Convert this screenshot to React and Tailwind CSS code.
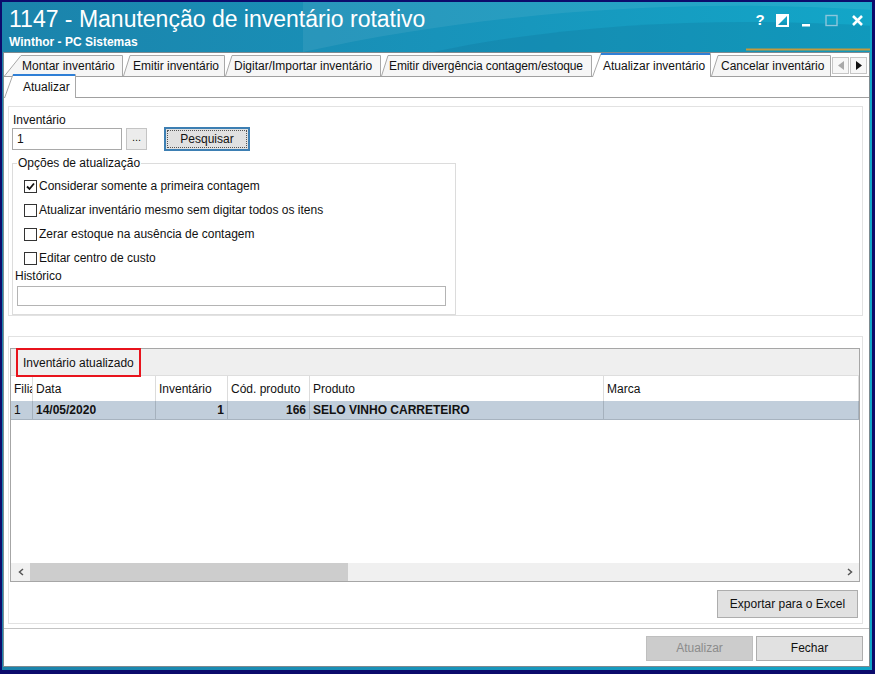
import React from "react";

const tabs = [
  { label: "Montar inventário", w: 119, cls: "w-[119px] pl-[18px]", slant: 17 },
  { label: "Emitir inventário", w: 102, cls: "w-[102px] pl-[10px]", slant: 7 },
  { label: "Digitar/Importar inventário", w: 156, cls: "w-[156px] pl-[9px]", slant: 7 },
  { label: "Emitir divergência contagem/estoque", w: 211, cls: "w-[211px] pl-[8px] tracking-[-0.1px]", slant: 7 },
  { label: "Atualizar inventário", w: 119, cls: "w-[119px] pl-[11px]", slant: 9, active: true },
  { label: "Cancelar inventário", w: 120, cls: "w-[120px] pl-[10px]", slant: 7 },
];

const columns = [
  { title: "Filial", cls: "w-[22px]", value: "1", align: "text-left" },
  { title: "Data", cls: "w-[123px]", value: "14/05/2020", align: "text-left" },
  { title: "Inventário", cls: "w-[72px]", value: "1", align: "text-right" },
  { title: "Cód. produto", cls: "w-[82px]", value: "166", align: "text-right" },
  { title: "Produto", cls: "w-[294px]", value: "SELO VINHO CARRETEIRO", align: "text-left" },
  { title: "Marca", cls: "flex-1", value: "", align: "text-left" },
];

const options = [
  { label: "Considerar somente a primeira contagem", checked: true },
  { label: "Atualizar inventário mesmo sem digitar todos os itens" },
  { label: "Zerar estoque na ausência de contagem" },
  { label: "Editar centro de custo" },
];

function Tab({ label, w, cls, slant, active }) {
  const h = active ? 24 : 21;
  return (
    <div
      className={`relative shrink-0 flex items-center whitespace-nowrap ${cls} ${
        active ? "h-[24px] -mb-px z-10" : "h-[21px]"
      }`}
    >
      <svg className="absolute inset-0" width={w} height={h}>
        <polyline
          points={`0.5,${h} ${slant},0.5 ${w - 0.5},0.5 ${w - 0.5},${h}`}
          fill={active ? "#ffffff" : "#f6f6f6"}
          stroke="#a8a8a8"
          strokeWidth="1"
        />
        {active && <line x1={slant} y1="1" x2={w - 1} y2="1" stroke="#2f7fd6" strokeWidth="2" />}
      </svg>
      <span className={`relative ${active ? "mt-[1px]" : ""}`}>{label}</span>
    </div>
  );
}

function Checkbox({ checked }) {
  return (
    <span className="w-[13px] h-[13px] border border-[#333] bg-white flex items-center justify-center shrink-0">
      {checked && (
        <svg width="11" height="11" viewBox="0 0 11 11">
          <polyline points="2,5.5 4.5,8 9,2.5" fill="none" stroke="#111" strokeWidth="1.8" />
        </svg>
      )}
    </span>
  );
}

function TitleBar() {
  return (
    <div className="relative h-[50px] shrink-0 overflow-hidden">
      {/* swoosh across the caption */}
      <svg className="absolute inset-0" width="870" height="50">
        <path d="M300 50 C 480 10, 680 -4, 870 8 L 870 0 L 300 0 Z" fill="#ffffff" opacity="0.07" />
        <path d="M430 50 C 560 22, 720 14, 870 24 L 870 50 Z" fill="#0b5f86" opacity="0.18" />
        <line x1="743" y1="47.5" x2="870" y2="47.5" stroke="#c49a3c" strokeWidth="2" />
      </svg>
      <div className="relative pl-[6px] pt-[4px] text-white">
        <div className="text-[23px] leading-[26px]">1147 - Manutenção de inventário rotativo</div>
        <div className="text-[12px] leading-[14px] font-bold mt-[3px]">Winthor - PC Sistemas</div>
      </div>
      <div className="absolute top-[7px] right-[6px] flex items-center text-white">
        <span className="w-[20px] text-center text-[15px] font-bold">?</span>
        <svg className="ml-[6px]" width="13" height="13" viewBox="0 0 13 13">
          <rect x="1" y="1" width="11" height="11" fill="none" stroke="#fff" strokeWidth="2" />
          <polygon points="1,1 12,1 1,12" fill="#fff" />
        </svg>
        <svg className="ml-[12px]" width="10" height="13" viewBox="0 0 10 13">
          <rect x="1" y="10" width="8" height="2.5" fill="#fff" />
        </svg>
        <svg className="ml-[14px]" width="13" height="13" viewBox="0 0 13 13">
          <rect x="1" y="1.5" width="11" height="10" fill="none" stroke="#8cc6dc" strokeWidth="1.4" />
        </svg>
        <svg className="ml-[13px]" width="13" height="13" viewBox="0 0 13 13">
          <path d="M2 2 L11 11 M11 2 L2 11" stroke="#fff" strokeWidth="2.6" />
        </svg>
      </div>
    </div>
  );
}

export default function App() {
  return (
    <div className="w-[875px] h-[674px] bg-[#0c0b6c] pt-[2px] pl-[2px] pr-[3px] pb-[4px] font-['Liberation_Sans',Arial,sans-serif] text-[12px] text-[#111]">
      <div className="h-full flex flex-col bg-gradient-to-r from-[#1b83ab] via-[#1893ba] to-[#12a6c8] pl-[1px] pr-[2px] pb-[3px]">
        <TitleBar />

        <div className="flex-1 flex flex-col bg-white border border-[#7d8a90] min-h-0">
          {/* main tab strip */}
          <div className="h-[24px] shrink-0 flex items-end border-b border-[#a0a0a0]">
            {tabs.map((t) => (
              <Tab key={t.label} {...t} />
            ))}
            <div className="flex mb-[2px] ml-[1px]">
              <span className="w-[17px] h-[17px] border border-[#c6c6c6] bg-[#f7f7f7] flex items-center justify-center">
                <svg width="6" height="9" viewBox="0 0 6 9">
                  <polygon points="6,0 0,4.5 6,9" fill="#a9a9a9" />
                </svg>
              </span>
              <span className="w-[17px] h-[17px] border border-[#c6c6c6] bg-[#f7f7f7] flex items-center justify-center ml-[1px]">
                <svg width="6" height="9" viewBox="0 0 6 9">
                  <polygon points="0,0 6,4.5 0,9" fill="#111" />
                </svg>
              </span>
            </div>
          </div>

          {/* inner tab strip */}
          <div className="h-[21px] shrink-0 flex items-end border-b border-[#a0a0a0]">
            <Tab label="Atualizar" w={72} cls="w-[72px] pl-[19px] h-[20px]" slant={9} active />
          </div>

          <div className="flex-1 flex flex-col pt-[8px] pl-[4px] pr-[6px] border-b border-[#c4c4c4] min-h-0">
            {/* search and options */}
            <div className="h-[210px] shrink-0 border border-[#e2e2e2] pt-[6px] pl-[3px]">
              <div className="pl-[1px] leading-[14px]">Inventário</div>
              <div className="flex items-center h-[24px]">
                <div className="w-[110px] h-[22px] border border-[#a9a9a9] bg-white pl-[4px] flex items-center">1</div>
                <div className="w-[21px] h-[22px] ml-[4px] border border-[#c4c4c4] bg-[#ececec] flex items-center justify-center text-[11px] pb-[3px]">
                  ...
                </div>
                <button className="ml-[17px] w-[86px] h-[24px] border-2 border-[#3d7fb3] bg-[#e1e1e1] p-[1px]">
                  <span className="h-full flex items-center justify-center border border-dotted border-[#555]">Pesquisar</span>
                </button>
              </div>

              <fieldset className="mt-[5px] w-[444px] h-[159px] border border-[#dcdcdc] pl-[11px]">
                <legend className="ml-[-7px] px-[1px] leading-[14px]">Opções de atualização</legend>
                <div className="pt-[4px]">
                  {options.map((o) => (
                    <div key={o.label} className="h-[24px] flex items-center gap-[2px]">
                      <Checkbox checked={o.checked} />
                      <span>{o.label}</span>
                    </div>
                  ))}
                </div>
                <div className="-ml-[9px] leading-[14px] mt-[-1px]">Histórico</div>
                <div className="-ml-[7px] mt-[3px] w-[429px] h-[20px] border border-[#b4b4b4] bg-white" />
              </fieldset>
            </div>

            {/* result grid */}
            <div className="flex-1 mt-[20px] mb-[4px] border border-[#e2e2e2] flex flex-col pt-[11px] pl-[1px] pr-[2px] min-h-0">
              <div className="h-[234px] shrink-0 border border-[#a6a6a6] flex flex-col bg-white">
                <div className="h-[27px] shrink-0 bg-[#efefef] border-b border-[#dedede] pl-[5px] flex items-start">
                  <span className="relative z-10 h-[29px] border-2 border-[#e8131c] px-[5px] flex items-center bg-[#efefef] -mt-px">
                    Inventário atualizado
                  </span>
                </div>
                <div className="h-[25px] shrink-0 flex">
                  {columns.map((c) => (
                    <div
                      key={c.title}
                      className={`${c.cls} shrink-0 h-full border-r border-[#dcdcdc] pl-[3px] flex items-center overflow-hidden whitespace-nowrap`}
                    >
                      {c.title === "Filial" ? <span className="w-[18px] overflow-hidden">{c.title}</span> : c.title}
                    </div>
                  ))}
                </div>
                <div className="h-[19px] shrink-0 flex bg-[#c1cedb] border-b border-[#a7b3bf] font-bold">
                  {columns.map((c) => (
                    <div
                      key={c.title}
                      className={`${c.cls} shrink-0 h-full border-r border-[#a5b1bd] px-[3px] flex items-center overflow-hidden whitespace-nowrap ${
                        c.align === "text-right" ? "justify-end" : ""
                      } ${c.title === "Filial" ? "font-normal" : ""}`}
                    >
                      {c.value}
                    </div>
                  ))}
                </div>
                <div className="flex-1" />
                <div className="h-[18px] shrink-0 bg-[#f0f0f0] flex items-center">
                  <span className="w-[19px] flex justify-center">
                    <svg width="6" height="8" viewBox="0 0 6 8">
                      <polyline points="5,1 1.5,4 5,7" fill="none" stroke="#555" strokeWidth="1.5" />
                    </svg>
                  </span>
                  <span className="w-[318px] h-[18px] bg-[#cdcdcd]" />
                  <span className="flex-1" />
                  <span className="w-[19px] flex justify-center">
                    <svg width="6" height="8" viewBox="0 0 6 8">
                      <polyline points="1,1 4.5,4 1,7" fill="none" stroke="#555" strokeWidth="1.5" />
                    </svg>
                  </span>
                </div>
              </div>
              <div className="flex justify-end mt-[8px] pr-[2px]">
                <button className="w-[141px] h-[28px] border border-[#adadad] bg-[#e1e1e1]">Exportar para o Excel</button>
              </div>
            </div>
          </div>

          {/* footer buttons */}
          <div className="h-[37px] shrink-0 flex items-center justify-end gap-[3px] pr-[6px] pt-[1px]">
            <button className="w-[107px] h-[25px] border border-[#bfbfbf] bg-[#cccccc] text-[#8b8b8b]">Atualizar</button>
            <button className="w-[107px] h-[25px] border border-[#adadad] bg-[#e1e1e1]">Fechar</button>
          </div>
        </div>
      </div>
    </div>
  );
}
